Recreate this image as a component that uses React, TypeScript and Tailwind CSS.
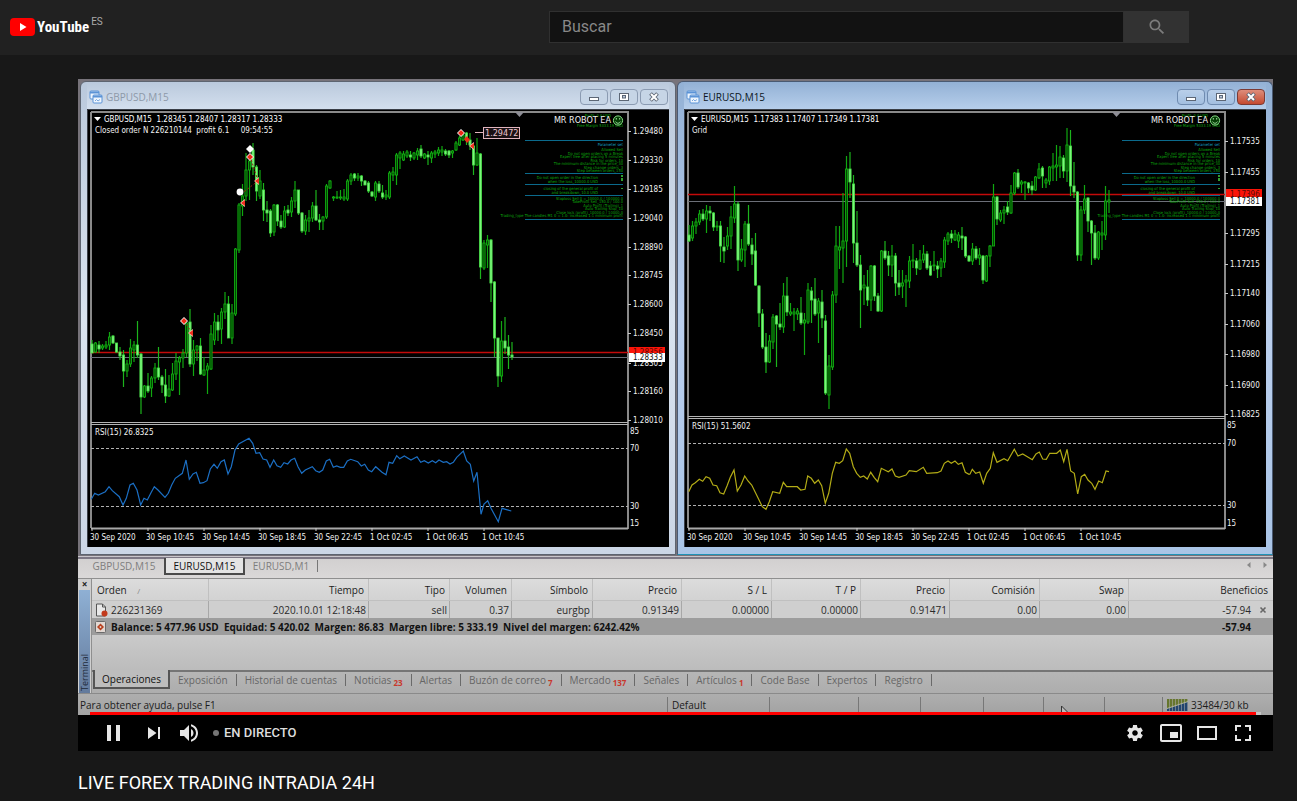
import React from "react";

type Candle = [number, number, number, number, number];

/* high, body top, body bottom, low, falling (1) or rising (0) */
const gbpCandles: Candle[] = [
  [340,344,353,353,1],[342,343,352,353,0],[341,345,349,353,1],[344,346,348,350,0],[341,345,347,349,0],
  [332,337,345,350,0],[335,336,343,344,1],[343,343,352,353,1],[347,352,356,360,1],[350,355,371,387,1],
  [360,364,371,377,0],[339,348,364,367,0],[341,345,350,362,0],[321,345,355,358,1],[353,354,397,414,1],
  [385,386,397,398,0],[373,386,391,393,1],[376,378,388,397,0],[363,368,378,383,0],[347,368,377,380,1],
  [375,377,385,393,1],[369,385,396,403,1],[375,389,396,397,0],[363,374,390,391,0],[353,361,374,380,0],
  [356,358,362,395,0],[349,353,358,368,0],[322,323,353,357,0],[309,322,364,367,1],[340,350,364,376,0],
  [345,346,350,361,0],[338,346,374,375,1],[357,370,375,376,0],[363,366,370,394,0],[325,334,369,370,0],
  [313,322,340,345,0],[315,322,330,341,1],[308,312,329,344,0],[292,304,312,319,0],[296,304,338,338,1],
  [304,313,338,344,0],[248,249,314,316,0],[203,205,250,253,0],[184,196,206,216,0],[153,170,196,201,0],
  [156,161,170,200,0],[143,150,167,175,1],[165,167,191,201,1],[170,181,196,199,0],[183,190,210,221,1],
  [201,210,213,222,1],[209,211,233,237,1],[204,205,232,236,0],[204,205,221,226,1],[215,221,227,229,1],
  [206,211,227,228,0],[205,210,213,216,1],[197,201,212,217,0],[181,190,201,208,0],[190,190,213,215,1],
  [212,213,231,233,1],[215,220,231,235,0],[210,218,221,232,0],[202,206,218,222,0],[190,206,220,221,1],
  [214,220,222,230,1],[216,217,221,230,0],[184,186,217,219,0],[180,181,188,189,0],[196,197,198,201,0],
  [191,197,198,199,0],[190,197,198,200,0],[189,197,199,201,0],[179,181,199,201,0],[173,175,181,185,0],
  [173,174,178,181,1],[173,176,178,181,0],[175,176,181,186,1],[180,181,185,185,1],[181,183,191,193,1],
  [191,192,196,197,1],[181,183,197,201,0],[181,184,191,193,1],[185,193,197,199,1],[190,195,197,200,0],
  [171,173,197,199,0],[167,172,175,181,0],[153,155,175,185,0],[151,153,158,169,0],[151,154,160,161,0],
  [150,152,156,158,0],[151,155,157,161,1],[152,153,158,160,0],[148,151,155,160,0],[145,149,156,158,1],
  [153,154,158,159,0],[151,155,157,165,1],[151,153,158,163,0],[150,152,154,158,0],[147,150,153,156,0],
  [146,150,152,156,0],[149,151,154,156,1],[150,151,155,158,1],[150,151,153,158,0],[141,143,150,151,0],
  [136,138,145,146,0],[133,135,140,141,0],[132,133,140,145,1],[133,140,145,150,1],[145,146,165,175,1],
  [138,153,165,166,0],[153,154,267,279,1],[240,243,268,270,0],[235,240,245,268,0],[239,240,283,302,1],
  [281,282,338,357,1],[338,338,376,387,1],[321,341,376,382,0],[317,341,348,354,1],[335,347,355,369,1],
  [342,355,357,360,1],
];

const eurCandles: Candle[] = [
  [225,235,241,242,1],[221,226,238,241,0],[218,222,226,234,0],[210,214,222,225,0],[209,214,219,221,1],
  [205,211,219,233,0],[206,211,213,221,1],[212,213,227,231,1],[221,226,227,231,0],[221,226,246,262,1],
  [237,247,251,263,1],[227,236,246,250,0],[206,217,236,249,0],[186,204,218,223,0],[202,204,260,271,1],
  [239,249,260,262,0],[221,224,250,267,0],[205,224,244,246,1],[238,245,254,265,1],[233,251,285,286,1],
  [285,286,313,327,1],[309,314,347,349,1],[333,347,362,373,1],[335,341,362,363,0],[314,317,342,349,0],
  [315,316,324,367,1],[303,324,327,330,1],[283,296,327,333,0],[277,296,312,316,1],[303,312,314,316,0],
  [308,312,314,331,0],[308,311,314,320,0],[297,313,323,325,1],[313,320,323,355,0],[283,290,322,324,0],
  [287,291,300,323,1],[278,299,314,316,1],[298,301,313,343,0],[290,302,318,328,1],[315,321,393,395,1],
  [355,366,395,409,0],[291,295,367,370,0],[226,246,295,303,0],[226,247,250,269,0],[193,241,248,283,0],
  [156,169,241,267,0],[152,169,182,198,1],[175,184,243,263,1],[211,243,265,267,1],[255,265,290,328,1],
  [275,285,288,305,0],[270,287,300,306,1],[265,266,300,311,0],[265,266,296,301,1],[293,296,311,312,1],
  [250,251,311,312,0],[241,251,258,260,1],[251,256,265,276,1],[245,256,265,277,0],[253,256,283,296,1],
  [270,283,287,295,1],[270,283,286,298,0],[275,280,282,307,0],[256,261,281,288,0],[244,260,261,268,0],
  [258,261,268,275,1],[250,260,269,270,0],[245,254,260,263,0],[251,254,268,270,1],[261,266,275,276,1],
  [251,265,266,271,0],[261,266,269,278,1],[258,261,268,277,0],[237,240,262,268,0],[232,234,241,245,0],
  [230,234,238,243,1],[230,234,240,241,0],[232,235,241,248,0],[227,236,238,250,1],[236,237,256,258,1],
  [255,256,261,262,1],[243,249,261,265,0],[246,249,258,260,1],[248,255,258,265,0],[255,256,280,284,1],
  [255,256,281,282,0],[245,246,256,267,0],[184,197,246,246,0],[196,197,219,225,1],[210,213,220,222,0],
  [206,210,213,224,0],[201,207,212,215,1],[185,193,213,214,0],[172,173,193,195,0],[169,173,187,189,1],
  [180,182,184,193,0],[181,182,183,200,0],[182,183,188,193,1],[181,186,190,195,1],[176,177,190,191,0],
  [163,169,178,179,0],[166,168,176,188,1],[178,180,183,188,0],[166,167,181,185,0],[153,166,168,181,0],
  [145,165,167,181,0],[146,157,166,178,0],[155,158,171,178,1],[128,145,171,182,0],[130,146,186,196,1],
  [162,186,192,198,1],[191,192,255,261,1],[206,210,255,261,0],[185,199,210,214,0],[197,198,221,232,1],
  [220,221,233,265,1],[225,233,258,260,1],[231,232,258,260,0],[221,233,235,250,0],[186,201,235,240,0],
  [190,200,202,213,0],
];

/* Oscillator samples, stored in thirds of a unit relative to an origin */
const trace = (ox: number, oy: number, samples: string) =>
  samples
    .split(" ")
    .map((p) => p.split(",").map(Number))
    .map(([x, y]) => `${(ox + x / 3).toFixed(1)},${(oy + y / 3).toFixed(1)}`)
    .join(" ");

const gbpRsi =
  trace(78, 270, "40,688 50,670 61,675 82,665 93,650 103,662 124,680 135,705 145,685 156,645 166,640 177,660 188,705 198,685 208,690 219,668 229,650 240,660 261,682 271,670 281,645 292,625 313,610 324,570 334,628 345,612 355,607 366,640 376,638 387,632 397,597 408,583 418,595 429,575 439,570 450,612 460,590 471,540 482,522 513,505 524,520 534,550 545,548 555,567 566,570 576,592 587,570 597,587 608,592 618,578 629,582 639,570 650,565 660,590 671,610 682,600 703,590 713,602 724,607 734,600 745,573 755,568 766,592 776,588 787,592 797,592 808,573 818,568 839,575 850,588 860,583 871,600") +
  " " +
  trace(370, 270, "5,605 17,590 36,607 48,614 57,577 68,580 80,557 89,566 103,558 123,570 141,560 152,577 163,572 175,579 187,572 197,578 207,570 220,577 230,575 240,582 250,577 260,562 280,543 290,573 301,583 311,633 321,607 333,733 342,702 353,692 363,715 385,755 396,715 424,723");

const eurRsi =
  trace(676, 310, "38,545 48,525 58,518 70,508 80,514 90,500 101,505 111,525 122,527 132,548 143,552 153,528 163,502 174,480 184,543 195,525 206,498 216,513 227,525 248,568 259,590 270,598 280,575 290,545 311,550 322,517 332,530 364,530 374,540 387,538 395,498 406,505 416,520 427,510 437,527 448,580 458,550 469,490 479,457 490,460 500,452 511,417 521,430 532,470 542,490 553,502 563,498 574,507 584,487 595,503 605,515 616,475 637,485 648,477 658,498 669,502 690,495 700,482 721,485 742,472 752,490 784,488 795,483 805,460 816,453 826,460 837,453 847,463 858,458 868,487 879,493") +
  " " +
  trace(970, 310, "0,492 7,478 17,490 29,486 40,520 50,490 61,475 70,428 81,457 102,446 113,452 133,418 144,438 158,432 187,449 198,432 208,426 218,447 229,448 239,430 260,430 271,420 281,455 291,418 302,483 313,490 323,552 334,500 344,493 354,510 365,520 375,538 386,513 397,518 408,483 417,485");

const timeLabels = ["30 Sep 2020", "30 Sep 10:45", "30 Sep 14:45", "30 Sep 18:45", "30 Sep 22:45", "1 Oct 02:45", "1 Oct 06:45", "1 Oct 10:45"];

const robotLines: [number, number, string][] = [
  [151, 623, "Allowed Sell"],
  [155, 623, "Do not open orders on a Break"],
  [158, 623, "Expert free after placing 5 minutes"],
  [162, 623, "Risk for orders_10"],
  [165, 623, "The minimum distance in the price_30"],
  [169, 623, "Step change orders_3"],
  [172, 623, "Step between orders_150"],
  [179, 598, "Do not open order in the direction"],
  [183, 598, "when the loss_10000.0 USD"],
  [190, 598, "closing of the general profit of"],
  [194, 598, "and breakdown_10.0 USD"],
  [200, 623, "Stoploss Sell 0 = 10000.0 / 100000.0"],
  [203, 623, "TakeProfit Sell_150.0 / 100.0"],
  [207, 623, "Auto Profit (Trailing)_1"],
  [210, 623, "Auto Trailing Stop_10"],
  [214, 623, "Close lock (profit)_10000.0 / 10000.0"],
];

interface ChartProps {
  name: string;
  left: number;
  axis: number;
  split: number;
  origin: number;
  heading: string;
  note: string;
  candles: Candle[];
  rsiName: string;
  rsi: string;
  rsiColor: string;
  levels: [number, number];
  prices: [number, string][];
  ask: [number, string];
  bid: [number, string];
  children?: React.ReactNode;
}

function Chart(p: ChartProps) {
  const edge = p.origin - 1;
  const shift = p.axis - 628;
  return (
    <svg
      viewBox={`${p.left} 109 582 438`}
      className="block h-auto w-full bg-black font-['DejaVu_Sans_Condensed','DejaVu_Sans',sans-serif] text-[8px]"
      role="img"
      aria-label={p.name}
    >
      <rect x={p.left} y={109} width={582} height={438} fill="#000" />
      <path d={`M${p.left + 0.5} 547V109.5H${p.left + 582}`} stroke="#3a3f48" fill="none" />
      <path d={`M${edge} 528V112M${edge} 112H${p.axis}M${p.axis} 111V529`} stroke="#8a8a8a" strokeWidth={2} fill="none" />
      <path d={`M${edge} ${p.split + 0.5}H${p.axis}M${edge} ${p.split + 2.5}H${p.axis}`} stroke="#b4b4b4" fill="none" />
      <path d={`M${edge} 528.5H${p.axis}`} stroke="#a8a8a8" strokeWidth={2} />
      {p.levels.map((y) => (
        <path key={y} d={`M${edge} ${y + 0.5}H${p.axis}`} stroke="#b0b0b0" strokeDasharray="3 2" />
      ))}
      <path d={`M${edge} ${p.bid[0] + 0.5}H${p.axis}`} stroke="#6c6f78" />
      <path d={`M${edge} ${p.ask[0] + 0.5}H${p.axis}`} stroke="#c40a0a" strokeWidth={1.4} />

      {p.candles.map(([hi, top, bottom, lo, falling], i) => {
        const x = p.origin + i * 3.5;
        return (
          <g key={i}>
            <path d={`M${x} ${hi}V${lo}`} stroke={falling ? "#1cb41c" : "#10a810"} strokeWidth={1.2} />
            <rect
              x={x - 1.1}
              y={top}
              width={2.2}
              height={Math.max(bottom - top, 1)}
              fill={falling ? "#7cf57c" : "#004a00"}
              stroke={falling ? "#46dc46" : "#12b812"}
              strokeWidth={0.8}
            />
          </g>
        );
      })}

      <path d={`M${edge + 3} 117h7l-3.5 4z`} fill="#fff" />
      <text x={p.origin + 12} y={122} fill="#fff" xmlSpace="preserve">{p.heading}</text>
      <text x={p.origin + 3} y={133} fill="#f2f2f2" xmlSpace="preserve">{p.note}</text>
      <path d={`M${515 + shift} 112h9l-4.5 5z`} fill="#8e8e96" />

      {/* expert adviser panel */}
      <g transform={`translate(${shift} 0)`}>
        <g className="text-[4px]" fill="#0ca80c" textAnchor="end">
          <text x={611} y={117}>Profit: 0.0 USD</text>
          <text x={623} y={127}>Free Margin 5333.19 USD</text>
          <text x={623} y={146} fill="#16a6c8">Parameter set</text>
          {robotLines.map(([y, x, label]) => (
            <text key={y} x={x} y={y}>{label}</text>
          ))}
          <text x={623} y={217}>Trading_type The candles M1 0 = 1.0: increased 1:1 minimum profit</text>
        </g>
        <text x={611} y={123} textAnchor="end" fill="#f0f0f0" className="text-[9px]">MR ROBOT EA</text>
        <path d="M622 175v2m0 1v3m0 7v1" stroke="#3fd43f" strokeWidth={1.5} />
        <path d="M525 140.5h98M525 173.5h98M525 184.5h98M525 195.5h98M525 219.5h98" stroke="#0b6a8c" />
        <circle cx={618} cy={120.5} r={4.6} fill="#043d04" stroke="#8be08b" />
        <path d="M616.3 118v1.6M619.7 118v1.6M615.6 121.6c1 2.2 3.8 2.2 4.8 0" stroke="#b4f0b4" fill="none" strokeWidth={0.9} />
      </g>

      {p.children}

      {p.prices.map(([y, label]) => (
        <g key={label}>
          <path d={`M${p.axis} ${y + 0.5}h3`} stroke="#c8c8c8" />
          <text x={p.axis + 5} y={y + 3} fill="#f2f2f2">{label}</text>
        </g>
      ))}
      <rect x={p.axis + 1} y={p.ask[0] - 5} width={36} height={9} fill="#fb1408" />
      <text x={p.axis + 5} y={p.ask[0] + 3} fill="#5a0a05">{p.ask[1]}</text>
      <rect x={p.axis + 1} y={p.bid[0] - 4} width={36} height={9} fill="#fff" />
      <text x={p.axis + 5} y={p.bid[0] + 3} fill="#111">{p.bid[1]}</text>

      <text x={p.origin + 3} y={p.split + 13} fill="#f2f2f2">{p.rsiName}</text>
      <polyline points={p.rsi} fill="none" stroke={p.rsiColor} strokeWidth={1.2} />
      <g fill="#f2f2f2">
        <text x={p.axis + 2} y={p.split + 12}>85</text>
        <text x={p.axis + 2} y={p.levels[0] + 3}>70</text>
        <text x={p.axis + 2} y={p.levels[1] + 3}>30</text>
        <text x={p.axis + 2} y={526}>15</text>
        {timeLabels.map((label, i) => (
          <g key={label}>
            <path d={`M${p.origin + 56 * i} 528v3`} stroke="#c8c8c8" />
            <text x={p.origin + 56 * i - 2} y={540}>{label}</text>
          </g>
        ))}
      </g>
    </svg>
  );
}

function Marker({ x, y, white }: { x: number; y: number; white?: boolean }) {
  return (
    <g>
      <path d={`M${x - 4} ${y}l4-4 4 4-4 4z`} fill="#fff" />
      <path d={`M${x - 3} ${y}l3-3 3 3-3 3z`} fill={white ? "#fff" : "#ee2a16"} />
    </g>
  );
}

function Arrow({ x, y }: { x: number; y: number }) {
  return (
    <g>
      <path d={`M${x - 3} ${y}l5-4v8z`} fill="#f6c9b8" />
      <path d={`M${x - 2} ${y}l4-3v6z`} fill="#f0301c" />
    </g>
  );
}

function MdiIcon() {
  return (
    <svg viewBox="0 0 14 14" className="h-3.5 w-3.5" fill="#eef5fd" stroke="#5b93d6">
      <rect x="1" y="1" width="9" height="8" rx="1" />
      <path d="M1 2.5h9" strokeWidth="2" />
      <rect x="4" y="5" width="9" height="8" rx="1" />
      <path d="M4 6.5h9" strokeWidth="2" />
      <path d="M6 11l1.5-1.5L9 11l2-1.5" fill="none" strokeWidth=".8" />
    </svg>
  );
}

function MdiWindow({ title, active, children }: { title: string; active?: boolean; children: React.ReactNode }) {
  const button = active
    ? "flex h-4 w-7 items-center justify-center rounded-sm border border-[#6f8bb0] bg-linear-to-b from-[#b9cfe9] to-[#a3bfe0]"
    : "flex h-4 w-7 items-center justify-center rounded-sm border border-[#8b9bb2] bg-[#c6d5e6]";
  const close = active
    ? "flex h-4 w-7 items-center justify-center rounded-sm border border-[#7c3a34] bg-linear-to-b from-[#dd8d7b] to-[#c4492f]"
    : button;
  return (
    <section
      className={
        active
          ? "min-w-0 flex-1 rounded-t-md border border-[#4a5a72] border-b-[#1f93b8] bg-linear-to-b from-[#93b1d5] via-[#bcd0ee] to-[#a9c4e6] px-1.5 pb-[7px]"
          : "min-w-0 flex-1 rounded-t-md border border-[#5d6470] bg-linear-to-b from-[#bac9dc] via-[#d9e3ef] to-[#cbd6e6] px-1.5 pb-[7px]"
      }
    >
      <header
        className={
          active
            ? "flex h-[27px] items-center gap-[3px] bg-linear-to-b from-[#93b1d5] to-[#b6ceeb] pt-[3px] pr-px pl-0.5"
            : "flex h-[27px] items-center gap-[3px] bg-linear-to-b from-[#bac9dc] to-[#d3dfee] pt-[3px] pr-px pl-0.5"
        }
      >
        <MdiIcon />
        <h2 className={active ? "flex-1 text-[10px] leading-4 text-[#0c1622]" : "flex-1 text-[10px] leading-4 text-[#8d99a8]"}>{title}</h2>
        <div className="flex gap-0.5">
          <button className={button} aria-label="Minimizar">
            <svg viewBox="0 0 12 10" className="h-2.5 w-3"><rect x="1.5" y="5.5" width="9" height="3" fill="#fff" stroke="#5c6675" /></svg>
          </button>
          <button className={button} aria-label="Maximizar">
            <svg viewBox="0 0 12 10" className="h-2.5 w-3"><rect x="1.5" y="1.5" width="9" height="7" fill="#fff" stroke="#5c6675" /><rect x="4.5" y="3.5" width="3" height="2.500" fill="#b9c9de" stroke="#5c6675" /></svg>
          </button>
          <button className={close} aria-label="Cerrar">
            <svg viewBox="0 0 12 10" className="h-2.5 w-3"><path d="M2.500 1.5l7 7M9.500 1.5l-7 7" stroke="#5c6675" strokeWidth="3.8" /><path d="M3 2l6 6M9 2L3 8" stroke="#fff" strokeWidth="2" /></svg>
          </button>
        </div>
      </header>
      {children}
    </section>
  );
}

const columns: [string, string, string][] = [
  ["Tiempo", "2020.10.01 12:18:48", "w-[160px]"],
  ["Tipo", "sell", "w-[81px]"],
  ["Volumen", "0.37", "w-[62px]"],
  ["Símbolo", "eurgbp", "w-[81px]"],
  ["Precio", "0.91349", "w-[89px]"],
  ["S / L", "0.00000", "w-[90px]"],
  ["T / P", "0.00000", "w-[89px]"],
  ["Precio", "0.91471", "w-[89px]"],
  ["Comisión", "0.00", "w-[90px]"],
  ["Swap", "0.00", "w-[89px]"],
];

const terminalTabs: [string, string][] = [
  ["Exposición", ""],
  ["Historial de cuentas", ""],
  ["Noticias", "23"],
  ["Alertas", ""],
  ["Buzón de correo", "7"],
  ["Mercado", "137"],
  ["Señales", ""],
  ["Artículos", "1"],
  ["Code Base", ""],
  ["Expertos", ""],
  ["Registro", ""],
];

function Terminal() {
  return (
    <div className="flex border-t border-[#8f8f8f] text-[10px] leading-4 text-[#2a2a2a]">
      <aside className="flex w-[13px] flex-col items-center bg-[#cfcfcf]">
        <button className="h-[11px] text-[10px] leading-[9px] font-bold text-[#222]" aria-label="Cerrar terminal">×</button>
        <div className="flex w-[11px] flex-1 rotate-180 items-center bg-linear-to-t from-[#8fb0d4] to-[#637a9c] [writing-mode:vertical-rl]">
          <span className="pt-0.5 text-[9px] leading-[11px] text-[#1e2a3a]">Terminal</span>
        </div>
      </aside>
      <div className="flex min-w-0 flex-1 flex-col border-l border-[#8f8f8f]">
        <table className="w-full table-fixed border-separate border-spacing-0">
          <thead>
            <tr className="h-[22px] bg-linear-to-b from-[#dcdcdc] to-[#d2d2d2] text-[#222]">
              <th className="w-[117px] border-r border-b border-[#c0c0c0] p-0 pl-[5px] text-left font-normal">Orden <span className="pl-2 text-[8px] leading-3 text-[#888]">/</span></th>
              {columns.map(([head, , width], i) => (
                <th key={i} className={`${width} border-r border-b border-[#c0c0c0] p-0 pr-1 text-right font-normal`}>{head}</th>
              ))}
              <th className="border-b border-[#c0c0c0] p-0 pr-[5px] text-right font-normal">Beneficios</th>
            </tr>
          </thead>
          <tbody>
            <tr className="h-[17px] bg-[#cfcfcf]">
              <td className="border-r border-[#a8a8a8] p-0 pl-[3px]">
                <div className="flex items-center gap-[3px]">
                  <svg viewBox="0 0 13 14" className="h-3.5 w-[13px]">
                    <path d="M1.5 1h6l3 3v9h-9z" fill="#e8e8e8" stroke="#555" />
                    <path d="M7.5 1v3h3" fill="none" stroke="#555" />
                    <circle cx="9.5" cy="10.5" r="3" fill="#c23a1c" />
                  </svg>
                  226231369
                </div>
              </td>
              {columns.map(([, value], i) => (
                <td key={i} className="border-r border-[#a8a8a8] p-0 pr-0.5 text-right">{value}</td>
              ))}
              <td className="p-0">
                <div className="flex items-center justify-end gap-2 pr-1.5">
                  -57.94
                  <button aria-label="Cerrar orden">
                    <svg viewBox="0 0 8 8" className="h-2 w-2" stroke="#666" strokeWidth="1.6"><path d="M1.5 1.5l5 5M6.5 1.5l-5 5" /></svg>
                  </button>
                </div>
              </td>
            </tr>
            <tr className="h-[17px] bg-[#9d9d9d] font-bold text-[#111]">
              <td colSpan={11} className="p-0 pl-[3px]">
                <div className="flex items-center gap-[5px]">
                  <svg viewBox="0 0 11 12" className="h-3 w-[11px]">
                    <rect x=".5" y=".5" width="10" height="11" rx="1" fill="#e2d8d2" stroke="#6a6a6a" />
                    <path d="M5.5 2.5L9 6 5.5 9.5 2 6z" fill="#b8401e" />
                    <circle cx="5.5" cy="6" r=".9" fill="#e2d8d2" />
                  </svg>
                  <span className="whitespace-pre">Balance: 5 477.96 USD  Equidad: 5 420.02  Margen: 86.83  Margen libre: 5 333.19  Nivel del margen: 6242.42%</span>
                </div>
              </td>
              <td className="p-0 pr-[22px] text-right">-57.94</td>
            </tr>
          </tbody>
        </table>
        <div className="h-[35px] bg-linear-to-b from-[#cacaca] to-[#bcbcbc]" />
        <nav className="flex h-[23px] items-start border-t-2 border-[#757575] bg-linear-to-b from-[#b6b6b6] to-[#adadad] pl-px text-[#666]">
          <button className="-mt-0.5 h-[19px] w-[77px] border-2 border-t-0 border-[#555] bg-[#bdbdbd] text-[#111]">Operaciones</button>
          <ul className="flex pl-2">
            {terminalTabs.map(([name, count]) => (
              <li key={name} className="flex items-center pr-2">
                <button className="pr-2">
                  {name}
                  {count && <sub className="pl-0.5 text-[8px] font-bold text-[#c8382c]">{count}</sub>}
                </button>
                <span className="h-3 w-px bg-[#6a6a6a]" />
              </li>
            ))}
          </ul>
        </nav>
      </div>
    </div>
  );
}

function StatusBar() {
  const cell = "h-4 border-l border-[#777] pl-1";
  return (
    <footer className="flex h-[22px] items-start border-t border-[#8a8a8a] bg-linear-to-b from-[#aeaeae] to-[#a2a2a2] pt-[3px] text-[10px] leading-4 text-[#1c1c1c]">
      <span className="flex-1 pl-0.5">Para obtener ayuda, pulse F1</span>
      <span className={`${cell} w-[102px]`}>Default</span>
      <span className={`${cell} w-[89px]`} />
      <span className={`${cell} w-[62px]`} />
      <span className={`${cell} w-[63px]`} />
      <span className={`${cell} w-[60px]`} />
      <span className={`${cell} w-[61px]`}>
        <svg viewBox="0 0 9 12" className="mt-2 ml-3 h-3 w-[9px]"><path d="M1.500 1v9l3-2h4z" fill="#bbb" stroke="#333" /></svg>
      </span>
      <span className={`${cell} w-[58px]`} />
      <span className={`${cell} flex w-[111px] items-center gap-[3px]`}>
        <svg viewBox="0 0 21 12" className="h-3 w-[21px]">
          {[0, 1, 2, 3, 4, 5, 6].map((i) => (
            <g key={i}>
              <rect x={i * 3} y="0" width="2.4" height={9 - i} fill="#66762e" />
              <rect x={i * 3} y={9 - i} width="2.4" height={3 + i} fill="#22456e" />
            </g>
          ))}
          <path d="M0 9.500L21 2.500" stroke="#b4b89c" />
        </svg>
        33484/30 kb
      </span>
    </footer>
  );
}

function PlayerButton({ label, wide, paths }: { label: string; wide?: boolean; paths: string[] }) {
  return (
    <button aria-label={label} className={wide ? "flex h-9 w-[46px] justify-center" : "flex h-9 w-9 justify-center"}>
      <svg viewBox="0 0 36 36" className="h-9 w-9" fill="#e6e6e6" fillRule="evenodd">
        {paths.map((d) => <path key={d} d={d} />)}
      </svg>
    </button>
  );
}

export default function App() {
  return (
    <div className="min-h-screen bg-[#181818] font-[Roboto,sans-serif] text-white">
      <header className="flex h-[55px] items-center bg-[#212121] pb-px">
        <a href="#" className="flex flex-1 items-center pl-2.5" aria-label="YouTube ES">
          <svg viewBox="0 0 25 18" className="h-[18px] w-[25px]">
            <rect width="25" height="18" rx="4" fill="#f00" />
            <path d="M10 5l6.500 4-6.500 4z" fill="#fff" />
          </svg>
          <span className="pl-0.5 font-['Liberation_Sans_Narrow','Roboto_Condensed',sans-serif] text-[15px] leading-5 font-bold">YouTube</span>
          <span className="self-start pl-0.5 text-[10px] leading-[10px] text-[#aaa]">ES</span>
        </a>
        <form className="flex h-8 w-[640px]" role="search">
          <input
            type="text"
            placeholder="Buscar"
            aria-label="Buscar"
            className="min-w-0 flex-1 border border-[#303030] bg-[#121212] pl-3 text-[16px] placeholder:text-[#888]"
          />
          <button type="button" aria-label="Buscar" className="flex w-[65px] items-center justify-center bg-[#323232]">
            <svg viewBox="0 0 24 24" className="h-5 w-5" fill="#7c7c7c">
              <path d="M15.5 14h-.79l-.28-.27C15.41 12.59 16 11.11 16 9.5 16 5.91 13.09 3 9.5 3S3 5.91 3 9.5 5.91 16 9.5 16c1.61 0 3.09-.59 4.23-1.57l.27.28v.79l5 4.99L20.49 19l-4.99-5zm-6 0C7.01 14 5 11.99 5 9.5S7.01 5 9.5 5 14 7.01 14 9.5 11.99 14 9.5 14z" />
            </svg>
          </button>
        </form>
        <div className="w-[108px]" />
      </header>

      <main className="pt-6 pr-6 pl-[78px]">
        <div className="bg-black">
          <div className="bg-[#77737a] pt-0.5 font-['Open_Sans','Noto_Sans',sans-serif]">
            <div className="flex gap-px pl-0.5">
              <MdiWindow title="GBPUSD,M15">
                <Chart
                  name="GBPUSD M15"
                  left={87}
                  axis={628}
                  split={422}
                  origin={92}
                  heading="GBPUSD,M15  1.28345 1.28407 1.28317 1.28333"
                  note="Closed order N 226210144  profit 6.1     09:54:55"
                  candles={gbpCandles}
                  rsiName="RSI(15) 26.8325"
                  rsi={gbpRsi}
                  rsiColor="#1b6fc4"
                  levels={[448, 506]}
                  prices={[[131, "1.29480"], [160, "1.29330"], [189, "1.29185"], [218, "1.29040"], [247, "1.28890"], [275, "1.28745"], [304, "1.28600"], [333, "1.28450"], [363, "1.28305"], [391, "1.28160"], [420, "1.28010"]]}
                  ask={[352, "1.28356"]}
                  bid={[357, "1.28333"]}
                >
                  <path d="M241 194L258 181M250 156l8 25M184 321l8 12" stroke="#a01a10" strokeDasharray="2 2" />
                  <circle cx={240} cy={192} r={3.4} fill="#fff" />
                  <Arrow x={243} y={203} />
                  <Marker x={250} y={149} white />
                  <Marker x={250} y={157} />
                  <Arrow x={257} y={181} />
                  <Marker x={184} y={321} />
                  <Arrow x={191} y={333} />
                  <Marker x={461} y={133} />
                  <path d="M464 139l3-3 3 4-3 3z" fill="#ee2a16" />
                  <Arrow x={472} y={146} />
                  <path d="M475 132.500h8" stroke="#e0b4be" />
                  <rect x={483.5} y={127.5} width={36} height={11} fill="#1a1114" stroke="#e0b4be" />
                  <text x={485} y={136} fill="#e8c4cc" className="text-[9px]">1.29472</text>
                </Chart>
              </MdiWindow>
              <MdiWindow title="EURUSD,M15" active>
                <Chart
                  name="EURUSD M15"
                  left={684}
                  axis={1225}
                  split={416}
                  origin={689}
                  heading="EURUSD,M15  1.17383 1.17407 1.17349 1.17381"
                  note="Grid"
                  candles={eurCandles}
                  rsiName="RSI(15) 51.5602"
                  rsi={eurRsi}
                  rsiColor="#b3ac16"
                  levels={[443, 505]}
                  prices={[[141, "1.17535"], [172, "1.17455"], [233, "1.17295"], [264, "1.17215"], [293, "1.17140"], [324, "1.17060"], [354, "1.16980"], [385, "1.16900"], [414, "1.16825"]]}
                  ask={[194, "1.17396"]}
                  bid={[201, "1.17381"]}
                />
              </MdiWindow>
            </div>
            <div className="mt-px h-[3px] border-t border-[#c9c6cc] bg-[#7d7885]" />
            <nav className="flex h-[19px] items-start bg-linear-to-b from-[#d2d0d0] to-[#dad8d8] text-[10px] leading-[14px] text-[#7e7e7e]">
              <button className="w-[86px] pl-1.5">GBPUSD,M15</button>
              <button className="-mt-px h-[17px] w-[81px] border-2 border-t-0 border-[#4a4a4a] bg-[#e4e4e4] text-[#111]">EURUSD,M15</button>
              <button className="w-[72px]">EURUSD,M1</button>
              <span className="mt-px h-3 w-px bg-[#777]" />
              <div className="flex flex-1 justify-end gap-2 pt-0.5 pr-1">
                <button aria-label="Anterior"><svg viewBox="0 0 8 8" className="h-2 w-2" fill="#888"><path d="M5.500 1v6L2 4z" /></svg></button>
                <button aria-label="Siguiente"><svg viewBox="0 0 8 8" className="h-2 w-2" fill="#888"><path d="M2.500 1v6L6 4z" /></svg></button>
              </div>
            </nav>
            <Terminal />
            <div className="relative">
              <StatusBar />
              <div className="absolute inset-x-3 bottom-0 h-[3px] bg-[#c4c4c4]">
                <div className="h-full w-[99.6%] bg-[#f00]" />
                <input type="range" aria-label="Progreso" defaultValue={100} className="absolute inset-0 h-full w-full opacity-0" />
              </div>
            </div>
          </div>
          <div className="flex h-9 items-center px-3">
            <PlayerButton label="Pausa" wide paths={["M12,26 16,26 16,10 12,10z M21,26 25,26 25,10 21,10z"]} />
            <PlayerButton label="Siguiente vídeo" paths={["M12,24 20.5,18 12,12V24z M22,12v12h2V12h-2z"]} />
            <PlayerButton label="Silenciar" paths={["M8,21 L12,21 L17,26 L17,10 L12,15 L8,15 L8,21 Z M19,14 L19,22 C20.48,21.32 21.5,19.77 21.5,18 C21.5,16.26 20.48,14.74 19,14 Z", "M19,11.29 C21.89,12.15 24,14.83 24,18 C24,21.17 21.89,23.85 19,24.71 L19,26.77 C23.01,25.86 26,22.28 26,18 C26,13.72 23.01,10.14 19,9.23 L19,11.29 Z"]} />
            <button className="flex items-center gap-[5px] pl-[5px] text-[13px] leading-5 font-medium text-[#ddd]">
              <span className="h-1.5 w-1.5 rounded-full bg-[#757575]" />
              EN DIRECTO
            </button>
            <div className="flex flex-1 justify-end">
              <PlayerButton label="Configuración" paths={["m 23.94,18.78 c .03,-0.25 .05,-0.51 .05,-0.78 0,-0.27 -0.02,-0.52 -0.05,-0.78 l 1.68,-1.32 c .15,-0.12 .19,-0.33 .09,-0.51 l -1.6,-2.76 c -0.09,-0.17 -0.31,-0.24 -0.48,-0.17 l -1.99,.8 c -0.41,-0.32 -0.86,-0.58 -1.35,-0.78 l -0.30,-2.12 c -0.02,-0.19 -0.19,-0.33 -0.39,-0.33 l -3.2,0 c -0.2,0 -0.36,.14 -0.39,.33 l -0.30,2.12 c -0.48,.2 -0.93,.47 -1.35,.78 l -1.99,-0.8 c -0.18,-0.07 -0.39,0 -0.48,.17 l -1.6,2.76 c -0.10,.17 -0.05,.39 .09,.51 l 1.68,1.32 c -0.03,.25 -0.05,.52 -0.05,.78 0,.26 .02,.52 .05,.78 l -1.68,1.32 c -0.15,.12 -0.19,.33 -0.09,.51 l 1.6,2.76 c .09,.17 .31,.24 .48,.17 l 1.99,-0.8 c .41,.32 .86,.58 1.35,.78 l .30,2.12 c .02,.19 .19,.33 .39,.33 l 3.2,0 c .2,0 .36,-0.14 .39,-0.33 l .30,-2.12 c .48,-0.2 .93,-0.47 1.35,-0.78 l 1.99,.8 c .18,.07 .39,0 .48,-0.17 l 1.6,-2.76 c .09,-0.17 .05,-0.39 -0.09,-0.51 l -1.68,-1.32 0,0 z m -5.94,2.01 c -1.54,0 -2.8,-1.25 -2.8,-2.8 0,-1.54 1.25,-2.8 2.8,-2.8 1.54,0 2.8,1.25 2.8,2.8 0,1.54 -1.25,2.8 -2.8,2.8 l 0,0 z"]} />
              <PlayerButton label="Minirreproductor" paths={["M25,17 L17,17 L17,23 L25,23 Z", "M29,25 L29,10.98 C29,9.88 28.1,9 27,9 L9,9 C7.9,9 7,9.88 7,10.98 L7,25 C7,26.1 7.9,27 9,27 L27,27 C28.1,27 29,26.1 29,25 Z M27,25.02 L9,25.02 L9,10.97 L27,10.97 Z"]} />
              <PlayerButton label="Modo cine" paths={["m 28,11 0,14 -20,0 0,-14 z m -18,2 16,0 0,10 -16,0 0,-10 z"]} />
              <PlayerButton label="Pantalla completa" paths={["m 10,16 2,0 0,-4 4,0 0,-2 L 10,10 z", "m 20,10 0,2 4,0 0,4 2,0 0,-6 z", "m 24,24 -4,0 0,2 L 26,26 l 0,-6 -2,0 z", "M 12,20 10,20 10,26 l 6,0 0,-2 -4,0 z"]} />
            </div>
          </div>
        </div>
        <h1 className="pt-5 text-[18px] leading-6">LIVE FOREX TRADING INTRADIA 24H</h1>
      </main>
    </div>
  );
}
